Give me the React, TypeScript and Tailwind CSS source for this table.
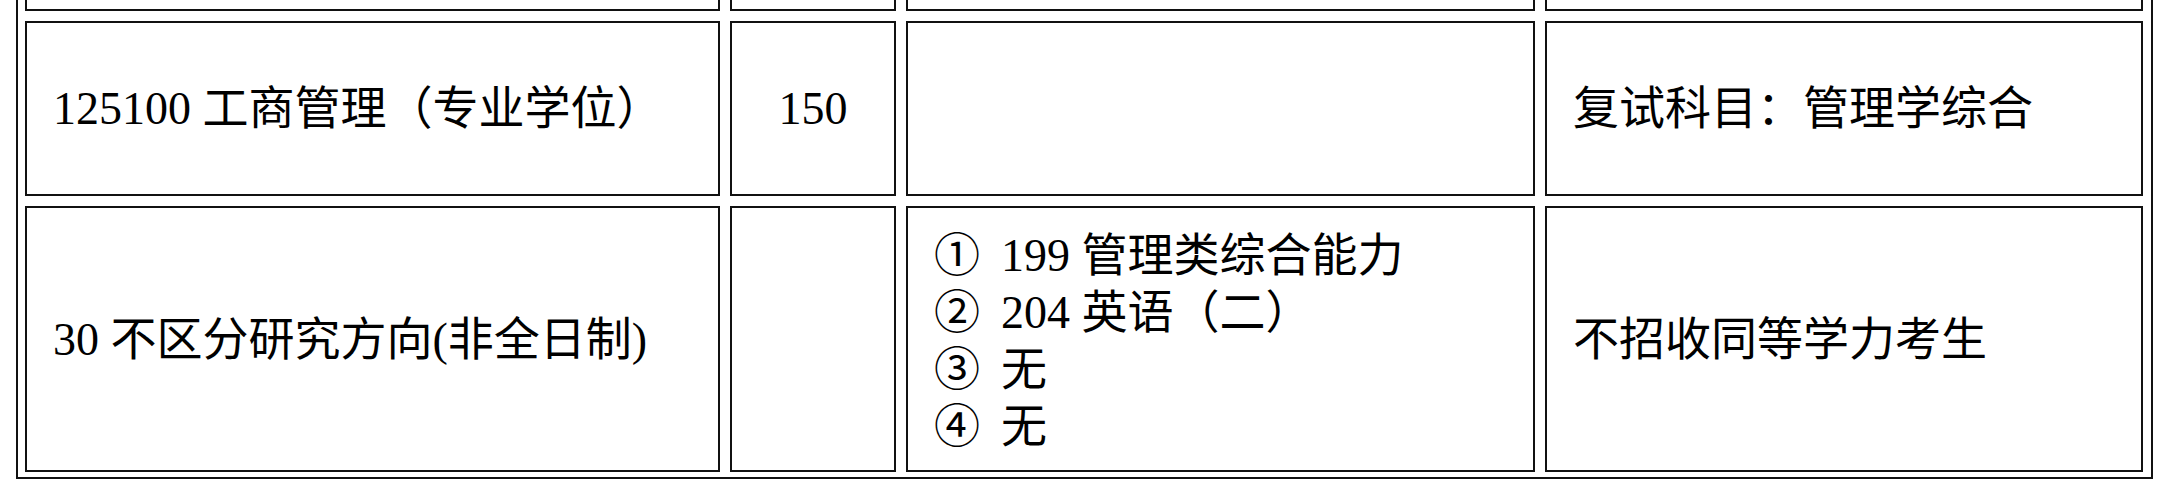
import React from 'react';

const font = { fontFamily: '"Liberation Serif", "Noto Sans CJK SC", serif' };

const cell = 'border-2 border-[#111] bg-white flex items-center px-[26px] text-[46px] leading-[57px] text-black';

const exams = [
  { no: '①', text: '199 管理类综合能力' },
  { no: '②', text: '204 英语（二）' },
  { no: '③', text: '无' },
  { no: '④', text: '无' },
];

export default function App() {
  return (
    <div className="h-[500px] w-[2168px] overflow-hidden bg-white" style={font}>
      <div className="ml-[16px] w-[2137px] border-x-2 border-b-2 border-[#111] pl-[7px] pr-[8px] pb-[5px]">
        <div className="grid grid-cols-[695px_166px_629px_598px] grid-rows-[11px_175px_266px] gap-x-[10px] gap-y-[10px]">
          {/* previous row, cut off by the top of the page */}
          <div className="border-2 border-t-0 border-[#111]" />
          <div className="border-2 border-t-0 border-[#111]" />
          <div className="border-2 border-t-0 border-[#111]" />
          <div className="border-2 border-t-0 border-[#111]" />

          <div className={cell}>125100 工商管理（专业学位）</div>
          <div className={`${cell} justify-center`}>150</div>
          <div className={cell} />
          <div className={cell}>复试科目：管理学综合</div>

          <div className={cell}>30 不区分研究方向(非全日制)</div>
          <div className={cell} />
          <div className={`${cell} pt-[3px]`}>
            <div className="flex flex-col">
              {exams.map((item) => (
                <div key={item.no} className="flex whitespace-nowrap">
                  <span className="inline-block w-[67px]">{item.no}</span>
                  <span>{item.text}</span>
                </div>
              ))}
            </div>
          </div>
          <div className={cell}>不招收同等学力考生</div>
        </div>
      </div>
    </div>
  );
}
